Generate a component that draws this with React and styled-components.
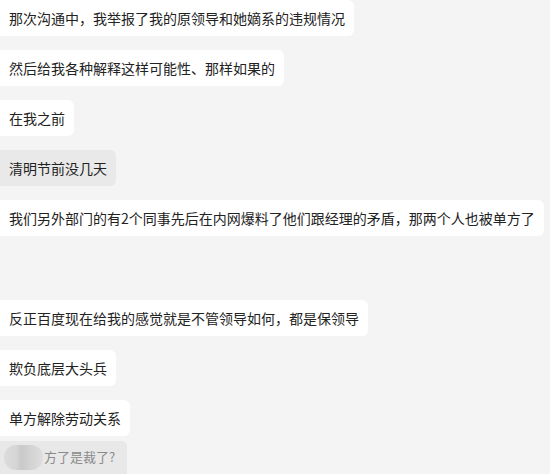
import styled, { createGlobalStyle } from 'styled-components'

const GlobalStyle = createGlobalStyle`
  html, body {
    margin: 0;
    padding: 0;
    background: #f4f4f4;
  }
  body {
    font-family: "Noto Sans CJK SC", "Noto Sans", sans-serif;
  }
`

const Thread = styled.div`
  width: 550px;
  height: 474px;
  overflow: hidden;
  background: #f4f4f4;
  display: flex;
  flex-direction: column;
  align-items: flex-start;
  gap: 14px;

  & > * {
    flex-shrink: 0;
  }
`

const Bubble = styled.div`
  box-sizing: border-box;
  height: 36px;
  padding: 0 9px;
  line-height: 36px;
  font-size: 14px;
  color: #222;
  white-space: nowrap;
  border-radius: 0 6px 6px 0;
  background: ${({ $muted }) => ($muted ? '#e9e9e9' : '#ffffff')};
`

// an empty message slot between two bubbles
const Spacer = styled.div`
  height: 36px;
`

const Quote = styled.div`
  box-sizing: border-box;
  margin-top: -9px;
  width: 127px;
  height: 34px;
  padding: 4px 4px 0;
  display: flex;
  align-items: flex-start;
  gap: 1px;
  background: #e8e8e8;
  border-radius: 0 5px 0 0;
`

const Blurred = styled.div`
  width: 39px;
  height: 25px;
  border-radius: 12px;
  background: linear-gradient(
    90deg,
    #dcdcdc 0%,
    #d6d6d6 30%,
    #c9c9c9 45%,
    #d2d2d2 65%,
    #dedede 100%
  );
  filter: blur(0.6px);
`

const QuoteText = styled.span`
  font-size: 13px;
  line-height: 24px;
  color: #8a8a8a;
  white-space: nowrap;
`

const messages = [
  { text: '那次沟通中，我举报了我的原领导和她嫡系的违规情况' },
  { text: '然后给我各种解释这样可能性、那样如果的' },
  { text: '在我之前' },
  { text: '清明节前没几天', muted: true },
  { text: '我们另外部门的有2个同事先后在内网爆料了他们跟经理的矛盾，那两个人也被单方了' },
  { spacer: true },
  { text: '反正百度现在给我的感觉就是不管领导如何，都是保领导' },
  { text: '欺负底层大头兵' },
  { text: '单方解除劳动关系' },
]

export default function App() {
  return (
    <>
      <GlobalStyle />
      <Thread>
        {messages.map((m, i) =>
          m.spacer ? (
            <Spacer key={i} />
          ) : (
            <Bubble key={i} $muted={m.muted}>
              {m.text}
            </Bubble>
          )
        )}
        <Quote>
          <Blurred />
          <QuoteText>方了是裁了?</QuoteText>
        </Quote>
      </Thread>
    </>
  )
}
